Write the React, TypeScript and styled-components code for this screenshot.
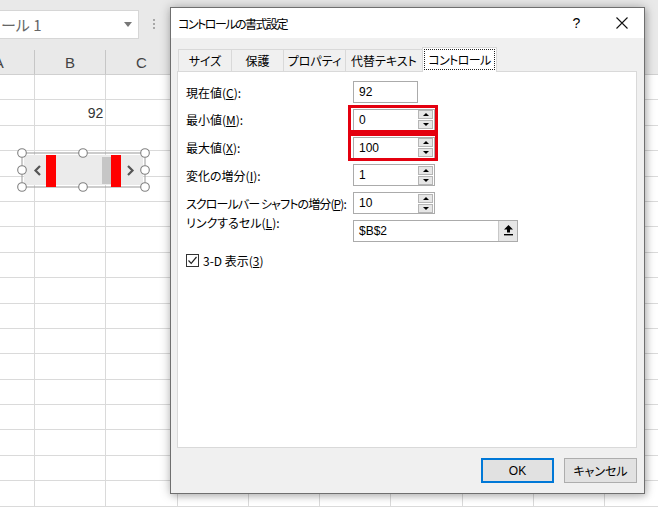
import React from 'react'
import styled, { createGlobalStyle, css } from 'styled-components'

const GlobalStyle = createGlobalStyle`
  html, body {
    margin: 0;
    padding: 0;
  }
  body {
    background: #fff;
    font-family: "Noto Sans CJK JP", "Noto Sans", sans-serif;
  }
`

const COLS = ['A', 'B', 'C', 'D', 'E', 'F', 'G', 'H', 'I', 'J']
const ROW_COUNT = 17

const Screen = styled.div`
  position: relative;
  width: 658px;
  height: 507px;
  overflow: hidden;
  background: #fff;
`

// ---- spreadsheet behind the dialog ----

const FormulaBar = styled.div`
  height: 50px;
  box-sizing: border-box;
  padding-top: 10px;
  background: #e9e9e9;
  display: flex;
  align-items: flex-start;
`

const NameBox = styled.div`
  width: 139px;
  height: 29px;
  box-sizing: border-box;
  background: #fff;
  border: 1px solid #d6d6d6;
  border-left: 0;
  display: flex;
  align-items: center;
  overflow: hidden;
`

const NameText = styled.span`
  flex: 1;
  padding-left: 1px;
  font-size: 15px;
  color: #666;
  white-space: nowrap;
  font-feature-settings: "palt";
`

const DropArrow = styled.span`
  width: 0;
  height: 0;
  margin-right: 6px;
  border-left: 4px solid transparent;
  border-right: 4px solid transparent;
  border-top: 5px solid #777;
`

const Grip = styled.span`
  margin: 9px 0 0 14px;
  display: flex;
  flex-direction: column;
  gap: 2px;

  & > i {
    display: block;
    width: 2px;
    height: 2px;
    background: #a8a8a8;
  }
`

const Sheet = styled.div`
  display: grid;
  grid-template-columns: repeat(10, 71.25px);
  grid-template-rows: 25px repeat(${ROW_COUNT}, 25.4px);
  margin-left: -36.25px;
`

const ColHeader = styled.div`
  box-sizing: border-box;
  background: #e9e9e9;
  border-right: 1px solid #c6c6c6;
  border-bottom: 1px solid #d0d0d0;
  display: flex;
  align-items: center;
  justify-content: center;
  font-family: "Liberation Sans", Arial, sans-serif;
  font-size: 15px;
  color: #444;
`

const Cell = styled.div`
  box-sizing: border-box;
  border-right: 1px solid #dadada;
  border-bottom: 1px solid #dadada;
  display: flex;
  align-items: center;
  justify-content: flex-end;
  padding-right: 2px;
  font-family: "Liberation Sans", Arial, sans-serif;
  font-size: 14px;
  color: #333;
`

const ControlShape = styled.svg`
  position: absolute;
  left: 14px;
  top: 145px;
  width: 140px;
  height: 50px;
`

const handles: [number, number][] = [
  [22, 153], [83, 153], [145, 153],
  [22, 170], [145, 170],
  [22, 187], [83, 187], [145, 187],
]

const ScrollControl = () => (
  <ControlShape viewBox="14 145 140 50">
    <rect x={24} y={155} width={119} height={30} fill="#ebebeb" />
    <rect x={22} y={153} width={123} height={34} fill="none" stroke="#9a9a9a" strokeWidth={1} />
    <polyline points="40,166 35.5,170.5 40,175" fill="none" stroke="#555" strokeWidth={2.2} />
    <rect x={46} y={155} width={10} height={32} fill="#ff0000" />
    <rect x={102} y={157} width={9} height={27} fill="#c6c6c6" />
    <rect x={111} y={155} width={10} height={32} fill="#ff0000" />
    <polyline points="128,166 132.5,170.5 128,175" fill="none" stroke="#555" strokeWidth={2.2} />
    {handles.map(([cx, cy]) => (
      <circle key={`${cx}-${cy}`} cx={cx} cy={cy} r={4.3} fill="#fff" stroke="#808080" strokeWidth={1.1} />
    ))}
  </ControlShape>
)

// ---- dialog ----

const Dialog = styled.div`
  position: absolute;
  left: 170px;
  top: 7px;
  width: 475px;
  height: 487px;
  box-sizing: border-box;
  border: 1px solid #6f6f6f;
  background: #f0f0f0;
  box-shadow: 0 0 10px rgba(0, 0, 0, 0.28), 2px 3px 6px rgba(0, 0, 0, 0.12);
  display: flex;
  flex-direction: column;
  font-family: "Noto Sans CJK JP", "Noto Sans", sans-serif;
  font-size: 12px;
  color: #000;
  font-feature-settings: "palt";
`

const TitleBar = styled.div`
  height: 30px;
  flex-shrink: 0;
  background: #fff;
  display: flex;
  align-items: center;
  padding-left: 7px;
`

const TitleText = styled.div`
  flex: 1;
  letter-spacing: -1.5px;
`

const TitleButton = styled.div`
  width: 45px;
  height: 30px;
  display: flex;
  align-items: center;
  justify-content: center;
  font-family: "Liberation Sans", Arial, sans-serif;
  font-size: 14px;
`

const Body = styled.div`
  flex: 1;
  display: flex;
  flex-direction: column;
  padding: 9px 7px 10px 6px;
`

const TabStrip = styled.div`
  position: relative;
  z-index: 2;
  height: 24px;
  padding-left: 1px;
  display: flex;
  align-items: flex-end;
`

const Tab = styled.div<{ $w: number; $active?: boolean }>`
  width: ${({ $w }) => $w}px;
  height: 22px;
  box-sizing: border-box;
  border: 1px solid #d9d9d9;
  border-bottom: 0;
  border-left-width: ${({ $active }) => ($active ? 1 : 0)}px;
  background: #f0f0f0;
  display: flex;
  align-items: center;
  justify-content: center;
  &:first-child {
    border-left-width: 1px;
  }
  ${({ $active }) =>
    $active &&
    css`
      height: 25px;
      margin-bottom: -1px;
      margin-left: -1px;
      background: #fff;
      padding-bottom: 2px;
      letter-spacing: -0.6px;
    `}
`

const FocusRect = styled.span`
  border: 1px dotted #222;
  padding: 1px 3px;
`

const Panel = styled.div`
  height: 377px;
  box-sizing: border-box;
  background: #fff;
  border: 1px solid #d9d9d9;
  padding: 9px 8px;
`

const Form = styled.div`
  display: grid;
  grid-template-columns: 167px auto;
  grid-auto-rows: 22px;
  row-gap: 5.8px;
  align-items: center;
  justify-items: start;
`

const Label = styled.div<{ $raised?: boolean; $tight?: boolean }>`
  white-space: nowrap;
  ${({ $tight }) => $tight && 'letter-spacing: -0.9px;'}
  ${({ $raised }) =>
    $raised &&
    css`
      align-self: start;
      margin-top: -6px;
    `}
`

const Field = styled.div<{ $w: number; $mark?: boolean }>`
  position: relative;
  width: ${({ $w }) => $w}px;
  height: 22px;
  box-sizing: border-box;
  border: 1px solid #ababab;
  background: #fff;
  display: flex;
  align-items: center;
  padding-left: 5px;
  font-family: "Liberation Sans", Arial, sans-serif;
  font-size: 12px;
  ${({ $mark }) =>
    $mark &&
    css`
      &::after {
        content: '';
        position: absolute;
        left: -6px;
        right: -4px;
        top: -5px;
        bottom: -3px;
        border: 3px solid #e4000f;
      }
    `}
`

const FieldValue = styled.span`
  flex: 1;
`

const Spinner = styled.div`
  width: 15px;
  margin-right: 1px;
  display: flex;
  flex-direction: column;
  gap: 1px;
`

const SpinButton = styled.div`
  height: 9px;
  box-sizing: border-box;
  background: #e6e6e6;
  border: 1px solid #b5b5b5;
  display: flex;
  align-items: center;
  justify-content: center;
`

const Arrow = styled.span<{ $down?: boolean }>`
  width: 0;
  height: 0;
  border-left: 3px solid transparent;
  border-right: 3px solid transparent;
  ${({ $down }) => ($down ? 'border-top: 3px solid #000;' : 'border-bottom: 3px solid #000;')}
`

const RefButton = styled.div`
  width: 19px;
  height: 20px;
  box-sizing: border-box;
  background: #e6e6e6;
  border-left: 1px solid #c8c8c8;
  display: flex;
  align-items: center;
  justify-content: center;
`

const CheckRow = styled.label`
  grid-column: 1 / span 2;
  margin-top: 4px;
  display: flex;
  align-items: center;
  gap: 4px;
`

const CheckBox = styled.span`
  width: 13px;
  height: 13px;
  box-sizing: border-box;
  border: 1px solid #333;
  background: #fff;
  display: flex;
  align-items: center;
  justify-content: center;
`

const ButtonRow = styled.div`
  margin-top: 10px;
  display: flex;
  justify-content: flex-end;
  gap: 10px;
`

const Button = styled.div<{ $primary?: boolean }>`
  width: 73px;
  height: 25px;
  box-sizing: border-box;
  background: #e1e1e1;
  border: 1px solid #adadad;
  display: flex;
  align-items: center;
  justify-content: center;
  ${({ $primary }) =>
    $primary &&
    css`
      border: 2px solid #0078d7;
      font-family: "Liberation Sans", Arial, sans-serif;
    `}
`

const SpinField = ({ value, mark }: { value: string; mark?: boolean }) => (
  <Field $w={82} $mark={mark}>
    <FieldValue>{value}</FieldValue>
    <Spinner>
      <SpinButton>
        <Arrow />
      </SpinButton>
      <SpinButton>
        <Arrow $down />
      </SpinButton>
    </Spinner>
  </Field>
)

const tabs = [
  { label: 'サイズ', w: 54 },
  { label: '保護', w: 52 },
  { label: 'プロパティ', w: 62 },
  { label: '代替テキスト', w: 77 },
]

const FormatDialog = () => (
  <Dialog>
    <TitleBar>
      <TitleText>コントロールの書式設定</TitleText>
      <TitleButton>?</TitleButton>
      <TitleButton>
        <svg width="12" height="12" viewBox="0 0 12 12">
          <path d="M0.5 0.5 L11.5 11.5 M11.5 0.5 L0.5 11.5" stroke="#111" strokeWidth="1.1" />
        </svg>
      </TitleButton>
    </TitleBar>
    <Body>
      <TabStrip>
        {tabs.map((t) => (
          <Tab key={t.label} $w={t.w}>
            {t.label}
          </Tab>
        ))}
        <Tab $w={75} $active>
          <FocusRect>コントロール</FocusRect>
        </Tab>
      </TabStrip>
      <Panel>
        <Form>
          <Label>
            現在値(<u>C</u>):
          </Label>
          <Field $w={65}>92</Field>

          <Label>
            最小値(<u>M</u>):
          </Label>
          <SpinField value="0" mark />

          <Label>
            最大値(<u>X</u>):
          </Label>
          <SpinField value="100" mark />

          <Label>
            変化の増分(<u>I</u>):
          </Label>
          <SpinField value="1" />

          <Label $tight>
            スクロールバー シャフトの増分(<u>P</u>):
          </Label>
          <SpinField value="10" />

          <Label $raised>
            リンクするセル(<u>L</u>):
          </Label>
          <Field $w={165}>
            <FieldValue>$B$2</FieldValue>
            <RefButton>
              <svg width="9" height="11" viewBox="0 0 9 11">
                <path d="M4.5 0 L9 4.5 L6 4.5 L6 7.5 L3 7.5 L3 4.5 L0 4.5 Z" fill="#000" />
                <rect x="0" y="9" width="9" height="1.4" fill="#000" />
              </svg>
            </RefButton>
          </Field>

          <CheckRow>
            <CheckBox>
              <svg width="11" height="11" viewBox="0 0 11 11">
                <polyline points="1.5,5.5 4.2,8.3 9.5,2" fill="none" stroke="#222" strokeWidth="1.2" />
              </svg>
            </CheckBox>
            <span>
              3-D 表示(<u>3</u>)
            </span>
          </CheckRow>
        </Form>
      </Panel>
      <ButtonRow>
        <Button $primary>OK</Button>
        <Button>キャンセル</Button>
      </ButtonRow>
    </Body>
  </Dialog>
)

export default function App() {
  const rows = Array.from({ length: ROW_COUNT }, (_, i) => i + 1)
  return (
    <Screen>
      <GlobalStyle />
      <FormulaBar>
        <NameBox>
          <NameText>ール 1</NameText>
          <DropArrow />
        </NameBox>
        <Grip>
          <i />
          <i />
          <i />
        </Grip>
      </FormulaBar>
      <Sheet>
        {COLS.map((c) => (
          <ColHeader key={`h${c}`}>{c}</ColHeader>
        ))}
        {rows.map((r) =>
          COLS.map((c) => <Cell key={`${r}-${c}`}>{r === 2 && c === 'B' ? '92' : ''}</Cell>)
        )}
      </Sheet>
      <ScrollControl />
      <FormatDialog />
    </Screen>
  )
}
